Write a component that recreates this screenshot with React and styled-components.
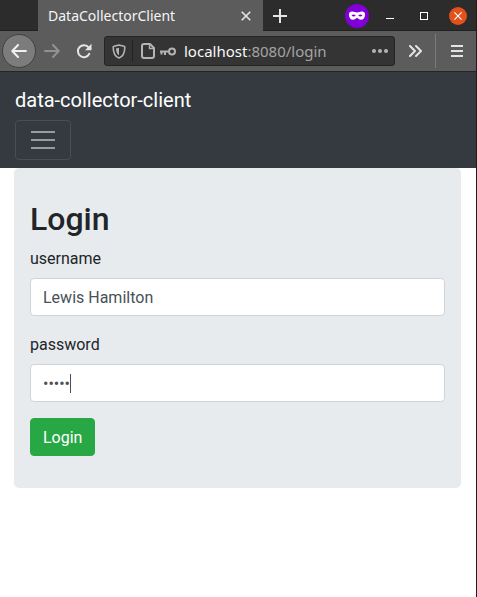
import React, { useState } from "react";
import styled, { createGlobalStyle } from "styled-components";

const GlobalStyle = createGlobalStyle`
  *, *::before, *::after { box-sizing: border-box; }
  html, body { margin: 0; background: #ffffff; }
  button, input { font: inherit; }
  h1 { margin: 0; }
`;

const Window = styled.div`
  min-height: 100vh;
  display: flex;
  flex-direction: column;
  border-right: 1px solid #231a1e;
  background: #ffffff;
  color: #212529;
  font: 400 16px/24px Roboto, "Liberation Sans", sans-serif;
`;

const TabBar = styled.div`
  display: flex;
  height: 31px;
  padding-left: 38px;
  background: #2c2c2c;
  box-shadow: inset 0 -1px #202020;
`;

const Tab = styled.div`
  display: flex;
  align-items: center;
  justify-content: space-between;
  flex: 0 1 225px;
  padding: 0 8px 0 10px;
  background: #5c5c5c;
  color: #f5f5f5;
  font: 400 14px/20px "Noto Sans", "Open Sans", sans-serif;
  white-space: nowrap;
`;

const PlainButton = styled.button`
  display: flex;
  align-items: center;
  justify-content: center;
  flex: none;
  width: ${(p) => p.$width || 32}px;
  padding: 0;
  border: 0;
  background: transparent;
  color: ${(p) => p.$color || "#e4e4e4"};
`;

const WindowControls = styled.div`
  display: flex;
  align-items: center;
  margin-left: auto;
  padding-right: 9px;
`;

const RoundBadge = styled.span`
  display: flex;
  align-items: center;
  justify-content: center;
  width: 24px;
  height: 24px;
  margin-right: 4px;
  border-radius: 50%;
  background: #8000d7;
`;

const CloseWindow = styled.button`
  display: flex;
  align-items: center;
  justify-content: center;
  width: 18px;
  height: 18px;
  margin-left: 8px;
  padding: 0;
  border: 0;
  border-radius: 50%;
  background: #e2501c;
`;

const Toolbar = styled.div`
  display: flex;
  align-items: center;
  height: 41px;
  padding: 0 3px 0 2px;
  background: #5c5c5c;
  border-bottom: 1px solid #252528;
`;

const BackButton = styled.button`
  display: flex;
  align-items: center;
  justify-content: center;
  flex: none;
  width: 34px;
  height: 34px;
  padding: 0;
  border: 1px solid #414141;
  border-radius: 50%;
  background: #7c7c7c;
`;

const AddressBar = styled.div`
  display: flex;
  align-items: center;
  flex: 1;
  min-width: 0;
  height: 30px;
  margin-left: 4px;
  padding: 0 6px 0 7px;
  border: 1px solid #242424;
  border-radius: 3px;
  background: #343434;
`;

const AddressDivider = styled.span`
  width: 1px;
  height: 22px;
  margin: 0 8px 0 6px;
  background: #232323;
`;

const Address = styled.span`
  flex: 1;
  min-width: 0;
  margin-left: 8px;
  overflow: hidden;
  color: #a4a4a4;
  font: 400 15px/20px "Noto Sans", "Open Sans", sans-serif;
  white-space: nowrap;
`;

const Host = styled.span`
  color: #f8f8f8;
`;

const ToolbarDivider = styled.span`
  width: 1px;
  height: 34px;
  margin: 0 4px 0 0;
  background: #7b7b7b;
`;

const Navbar = styled.nav`
  display: flex;
  flex-direction: column;
  align-items: flex-start;
  padding: 8px 15px;
  background: #343a40;
`;

const Brand = styled.a`
  padding: 5px 0;
  color: #ffffff;
  font-size: 20px;
  line-height: 30px;
  text-decoration: none;
`;

const NavToggle = styled.button`
  display: flex;
  align-items: center;
  justify-content: center;
  width: 56px;
  height: 40px;
  padding: 0;
  border: 1px solid #484e53;
  border-radius: 4px;
  background: transparent;
`;

const LoginForm = styled.form`
  margin: 0 15px 0 14px;
  padding: 32px 16px;
  border-radius: 5px;
  background: #e7ebee;
`;

const Title = styled.h1`
  margin-bottom: 8px;
  font-size: 32px;
  font-weight: 500;
  line-height: 38px;
`;

const Field = styled.div`
  display: flex;
  flex-direction: column;
  margin-bottom: 16px;
`;

const Label = styled.label`
  padding-bottom: 6px;
  line-height: 26px;
`;

const InputWrap = styled.div`
  position: relative;
  display: flex;
`;

const TextInput = styled.input`
  width: 100%;
  height: 38px;
  padding: 6px 12px;
  border: 1px solid #ced4da;
  border-radius: 4px;
  outline: none;
  background: #ffffff;
  color: #495057;
`;

const Caret = styled.span`
  position: absolute;
  top: 10px;
  left: 40px;
  width: 1px;
  height: 19px;
  background: #495057;
`;

const SubmitButton = styled.button`
  display: block;
  height: 38px;
  padding: 6px 12px 4px;
  border: 1px solid #28a745;
  border-radius: 4px;
  background: #28a745;
  color: #ffffff;
  line-height: 26px;
`;

const Icon = styled.svg.attrs({ "aria-hidden": true })`
  display: block;
  flex: none;
  fill: none;
  stroke: currentColor;
  stroke-width: 2;
`;

const SiteIcons = styled.span`
  display: flex;
  align-items: center;
  gap: 5px;
  color: #b4b4b4;
`;

function BrowserTabs() {
  return (
    <TabBar>
      <Tab>
        DataCollectorClient
        <PlainButton $width={18} aria-label="Close tab">
          <Icon width="10" height="10" viewBox="0 0 10 10">
            <path d="M.7.7l8.6 8.6M9.3.7L.7 9.3" strokeWidth="1.6" />
          </Icon>
        </PlainButton>
      </Tab>
      <PlainButton $width={34} aria-label="New tab">
        <Icon width="14" height="14" viewBox="0 0 14 14">
          <path d="M7 0v14M0 7h14" />
        </Icon>
      </PlainButton>
      <WindowControls>
        <RoundBadge role="img" aria-label="Private browsing">
          <Icon width="16" height="9" viewBox="0 0 16 9">
            <path
              d="M2.5.5C5 .2 6 1.4 8 1.4S11 .2 13.5.5C15.4.8 16 2 16 3.7c0 3-1.7 5-4.1 5C9.8 8.7 9 7 8 7s-1.8 1.7-3.9 1.7C1.7 8.7 0 6.7 0 3.7 0 2 .6.8 2.5.5zM2.5 4.6c1.2 1.3 3 1.3 4.3 0C5.7 3 3.5 3 2.5 4.6zm6.7 0c1.3 1.3 3.1 1.3 4.3 0-1-1.6-3.2-1.6-4.3 0z"
              fill="#fff"
              fillRule="evenodd"
              stroke="none"
            />
          </Icon>
        </RoundBadge>
        <PlainButton $width={34} $color="#fff" aria-label="Minimize">
          <Icon width="8" height="8" viewBox="0 0 8 8">
            <path d="M0 6.5h8" strokeWidth="1" />
          </Icon>
        </PlainButton>
        <PlainButton $width={34} $color="#fff" aria-label="Maximize">
          <Icon width="8" height="8" viewBox="0 0 8 8">
            <rect x=".5" y=".5" width="7" height="7" strokeWidth="1" />
          </Icon>
        </PlainButton>
        <CloseWindow aria-label="Close window">
          <Icon width="8" height="8" viewBox="0 0 8 8">
            <path d="M.4.4l7.2 7.2M7.6.4L.4 7.6" stroke="#fff" strokeWidth="1.1" />
          </Icon>
        </CloseWindow>
      </WindowControls>
    </TabBar>
  );
}

function BrowserToolbar() {
  return (
    <Toolbar>
      <BackButton aria-label="Back">
        <Icon width="16" height="14" viewBox="0 0 16 14">
          <path d="M7 1L1.3 7 7 13M1.5 7H15" stroke="#f0f0f0" strokeLinecap="round" strokeLinejoin="round" />
        </Icon>
      </BackButton>
      <PlainButton $color="#929292" aria-label="Forward">
        <Icon width="16" height="14" viewBox="0 0 16 14">
          <path d="M9 1l5.7 6L9 13M14.5 7H1" strokeLinecap="round" strokeLinejoin="round" />
        </Icon>
      </PlainButton>
      <PlainButton aria-label="Reload">
        <Icon width="16" height="16" viewBox="0 0 16 16">
          <path d="M12.700 4.500A6 6 0 1 0 13.300 10.800" strokeLinecap="round" />
          <path d="M15.500.8v6.400H9z" fill="currentColor" stroke="none" />
        </Icon>
      </PlainButton>
      <AddressBar>
        <SiteIcons>
          <Icon width="14" height="15" viewBox="0 0 14 15">
            <path d="M7 1L2 2.3c-.5.1-.8.5-.8 1C1.2 8.5 2.5 12.5 7 14c4.5-1.5 5.800-5.500 5.800-10.700 0-.5-.3-.9-.8-1z" strokeWidth="1.6" />
            <path d="M7 3.700L4 4.500C4.200 8 4.900 10.300 7 11.300z" fill="currentColor" stroke="none" />
          </Icon>
        </SiteIcons>
        <AddressDivider />
        <SiteIcons>
          <Icon width="14" height="16" viewBox="0 0 14 16">
            <path d="M3 1h6l4 4v8a2 2 0 0 1-2 2H3a2 2 0 0 1-2-2V3a2 2 0 0 1 2-2z" strokeLinejoin="round" />
            <path d="M8.500 1v4.500H13" strokeWidth="1.400" />
          </Icon>
          <Icon width="16" height="9" viewBox="0 0 16 9">
            <circle cx="12" cy="4.500" r="3" />
            <path d="M9 4.500H0M1.500 4.500v3M5 4.500v3.500" />
          </Icon>
        </SiteIcons>
        <Address>
          <Host>localhost</Host>:8080/login
        </Address>
        <PlainButton $width={16} $color="#b4b4b4" aria-label="Page actions">
          <Icon width="16" height="4" viewBox="0 0 16 4">
            <g fill="currentColor" stroke="none">
              <circle cx="2" cy="2" r="2" />
              <circle cx="8" cy="2" r="2" />
              <circle cx="14" cy="2" r="2" />
            </g>
          </Icon>
        </PlainButton>
      </AddressBar>
      <PlainButton $width={40} aria-label="More tools">
        <Icon width="14" height="12" viewBox="0 0 14 12">
          <path d="M2 1l5 5-5 5M8 1l5 5-5 5" strokeLinecap="round" strokeLinejoin="round" />
        </Icon>
      </PlainButton>
      <ToolbarDivider />
      <PlainButton $width={33} aria-label="Open menu">
        <Icon width="12" height="12" viewBox="0 0 12 12">
          <path d="M0 1h12M0 6h12M0 11h12" />
        </Icon>
      </PlainButton>
    </Toolbar>
  );
}

export default function App() {
  const [username, setUsername] = useState("Lewis Hamilton");
  const [password, setPassword] = useState("12345");

  return (
    <>
      <GlobalStyle />
      <Window>
        <BrowserTabs />
        <BrowserToolbar />
        <Navbar>
          <Brand href="#">data-collector-client</Brand>
          <NavToggle aria-label="Toggle navigation">
            <Icon width="24" height="18" viewBox="0 0 24 18">
              <path d="M0 1h24M0 9h24M0 17h24" stroke="#999c9f" />
            </Icon>
          </NavToggle>
        </Navbar>
        <LoginForm onSubmit={(e) => e.preventDefault()}>
          <Title>Login</Title>
          <Field>
            <Label htmlFor="username">username</Label>
            <TextInput
              id="username"
              type="text"
              value={username}
              onChange={(e) => setUsername(e.target.value)}
            />
          </Field>
          <Field>
            <Label htmlFor="password">password</Label>
            <InputWrap>
              <TextInput
                id="password"
                type="password"
                value={password}
                onChange={(e) => setPassword(e.target.value)}
              />
              <Caret />
            </InputWrap>
          </Field>
          <SubmitButton type="submit">Login</SubmitButton>
        </LoginForm>
      </Window>
    </>
  );
}
